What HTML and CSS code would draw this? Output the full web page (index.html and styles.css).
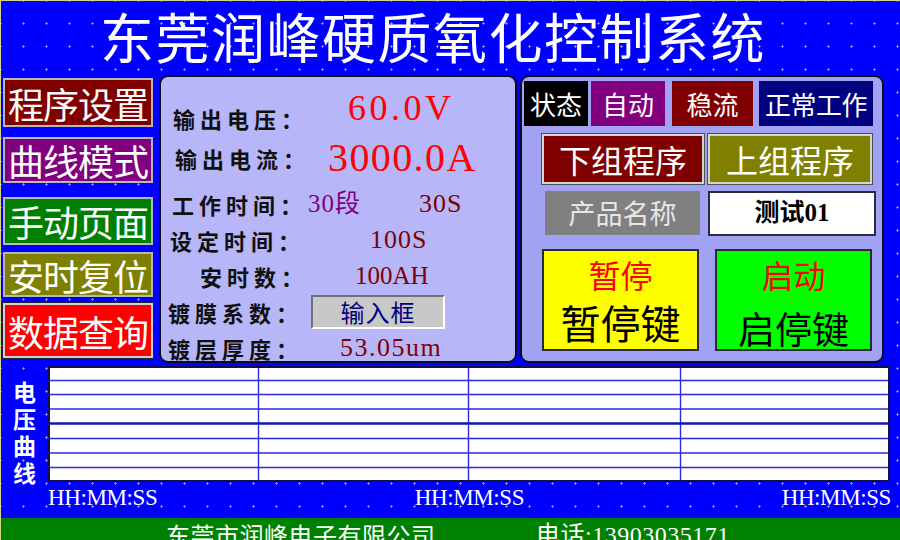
FILE: index.html
```html
<!DOCTYPE html>
<html lang="zh">
<head>
<meta charset="utf-8">
<title>东莞润峰硬质氧化控制系统</title>
<link rel="stylesheet" href="styles.css">
</head>
<body>
<div class="screen">
  <div class="header">东莞润峰硬质氧化控制系统</div>

  <div class="main">
    <div class="nav">
      <div class="nbtn n1">程序设置</div>
      <div class="nbtn n2">曲线模式</div>
      <div class="nbtn n3">手动页面</div>
      <div class="nbtn n4">安时复位</div>
      <div class="nbtn n5">数据查询</div>
    </div>

    <div class="panel info">
      <div class="row r1">
        <span class="lbl">输出电压：</span>
        <span class="val big v1">60.0V</span>
      </div>
      <div class="row r2">
        <span class="lbl">输出电流：</span>
        <span class="val big v2">3000.0A</span>
      </div>
      <div class="row r3">
        <span class="lbl">工作时间：</span>
        <span class="val purple v3">30段</span>
        <span class="val v3b">30S</span>
      </div>
      <div class="row">
        <span class="lbl l-set">设定时间：</span>
        <span class="val v4">100S</span>
      </div>
      <div class="row">
        <span class="lbl l-ah">安时数：</span>
        <span class="val v5">100AH</span>
      </div>
      <div class="row">
        <span class="lbl l-film">镀膜系数：</span>
        <span class="inputbox">输入框</span>
      </div>
      <div class="row">
        <span class="lbl l-film">镀层厚度：</span>
        <span class="val v7">53.05um</span>
      </div>
    </div>

    <div class="panel ctrl">
      <div class="status">
        <div class="st st-k">状态</div>
        <div class="st st-auto">自动</div>
        <div class="st st-cc">稳流</div>
        <div class="st st-ok">正常工作</div>
      </div>
      <div class="progs">
        <div class="pbtn p-down">下组程序</div>
        <div class="pbtn p-up">上组程序</div>
      </div>
      <div class="product">
        <div class="pname">产品名称</div>
        <div class="pval">测试01</div>
      </div>
      <div class="keys">
        <div class="key k-pause">
          <div class="k-top">暂停</div>
          <div class="k-main">暂停键</div>
        </div>
        <div class="key k-start">
          <div class="k-top">启动</div>
          <div class="k-main">启停键</div>
        </div>
      </div>
    </div>
  </div>

  <div class="curve">
    <div class="curve-label">
      <div class="cl">电</div>
      <div class="cl">压</div>
      <div class="cl">曲</div>
      <div class="cl">线</div>
    </div>
    <div class="chart">
      <svg width="842" height="116" viewBox="0 0 842 116">
        <rect x="0" y="0" width="842" height="116" fill="#ffffff"/>
        <g stroke="#2a2ae0" stroke-width="1.4">
          <line x1="0" y1="14.5" x2="842" y2="14.5"/>
          <line x1="0" y1="28.5" x2="842" y2="28.5"/>
          <line x1="0" y1="43" x2="842" y2="43"/>
          <line x1="0" y1="72.5" x2="842" y2="72.5"/>
          <line x1="0" y1="87" x2="842" y2="87"/>
          <line x1="0" y1="101.5" x2="842" y2="101.5"/>
          <line x1="210.5" y1="0" x2="210.5" y2="116"/>
          <line x1="420.5" y1="0" x2="420.5" y2="116"/>
          <line x1="632.5" y1="0" x2="632.5" y2="116"/>
        </g>
        <line x1="0" y1="57.5" x2="842" y2="57.5" stroke="#1414b0" stroke-width="2.4"/>
        <rect x="1" y="1" width="840" height="114" fill="none" stroke="#10104a" stroke-width="2"/>
      </svg>
    </div>
  </div>

  <div class="times">
    <span>HH:MM:SS</span>
    <span>HH:MM:SS</span>
    <span>HH:MM:SS</span>
  </div>

  <div class="footer">
    <span class="company">东莞市润峰电子有限公司</span>
    <span class="phone">电话:13903035171</span>
  </div>
</div>
</body>
</html>
```

FILE: styles.css
```css
* { box-sizing: border-box; }

html, body {
  margin: 0;
  padding: 0;
  background: #0000ff;
}

.screen {
  width: 900px;
  height: 540px;
  overflow: hidden;
  background-color: #0000ff;
  background-image: radial-gradient(circle, #9a9aff 0.9px, rgba(0,0,255,0) 1.3px);
  background-size: 23px 23px;
  background-position: 11px 11px;
  border-top: 1px solid #d6d68a;
  border-left: 1px solid #d6d68a;
  font-family: "Noto Sans CJK SC", "Noto Sans", sans-serif;
}

/* ---------- header ---------- */
.header {
  height: 74px;
  padding-left: 99px;
  font-size: 54px;
  line-height: 70px;
  letter-spacing: 1.5px;
  color: #ffffff;
  white-space: nowrap;
}

/* ---------- main row ---------- */
.main {
  display: flex;
  height: 291px;
}

.nav {
  width: 152px;
  margin-left: 2px;
  display: flex;
  flex-direction: column;
}

.nbtn {
  width: 150px;
  border: 2px solid #b8b8b8;
  color: #ffffff;
  font-size: 36px;
  line-height: 1;
  display: flex;
  align-items: center;
  justify-content: center;
  white-space: nowrap;
  letter-spacing: -1px;
}
.n1 { margin-top: 3px; height: 49px; background: #800000; }
.n2 { margin-top: 10px; height: 46px; background: #800080; }
.n3 { margin-top: 14px; height: 48px; background: #008000; }
.n4 { margin-top: 7px; height: 45px; background: #808000; }
.n5 { margin-top: 6px; height: 55px; background: #ff0000; border-color: #d0d0d0; box-shadow: 0 0 0 1px #202040; }

.panel {
  height: 288px;
  border: 2px solid #0c0c28;
  border-radius: 9px;
}

/* ---------- info panel ---------- */
.info {
  width: 358px;
  margin-left: 4px;
  background: #b6b6f8;
  padding-top: 12px;
}

.row {
  display: flex;
  align-items: center;
  height: 36px;
  white-space: nowrap;
}
.r1 { height: 46px; }
.r2 { height: 46px; }
.r3 { margin-top: 5px; }

.lbl {
  flex: 0 0 145px;
  width: 145px;
  padding-left: 12px;
  font-size: 22px;
  line-height: 26px;
  letter-spacing: 5px;
  font-weight: 700;
  color: #101010;
}
.r1 .lbl { padding-top: 12px; }
.r2 .lbl { padding-left: 14px; }
.r3 .lbl { padding-left: 11px; }
.l-set { padding-left: 9px; }
.l-ah { padding-left: 39px; }
.l-film { padding-left: 7px; }

.val {
  font-family: "Liberation Serif", "Noto Sans CJK SC", serif;
  font-size: 26px;
  line-height: 30px;
  letter-spacing: 1px;
  color: #800000;
}
.val.big {
  color: #ff0000;
}
.v1 { font-size: 36px; line-height: 40px; letter-spacing: 3.5px; margin-left: 42px; padding-bottom: 8px; }
.v2 { font-size: 40px; line-height: 44px; letter-spacing: 1.4px; margin-left: 22px; }
.purple { color: #800080; font-size: 25px; }
.v3 { margin-left: 2px; }
.v3b { margin-left: 58px; }
.v4 { margin-left: 64px; }
.v5 { margin-left: 49px; font-size: 25px; letter-spacing: 0; }
.v7 { margin-left: 34px; letter-spacing: 1.5px; }

.inputbox {
  margin-left: 5px;
  width: 134px;
  height: 34px;
  background: #c8c8c8;
  border-top: 2px solid #707070;
  border-left: 2px solid #707070;
  border-bottom: 2px solid #ffffff;
  border-right: 2px solid #ffffff;
  color: #000080;
  font-size: 24px;
  line-height: 30px;
  text-align: center;
  letter-spacing: 1px;
}

/* ---------- control panel ---------- */
.ctrl {
  width: 364px;
  margin-left: 3px;
  background: #a2a2f2;
  padding-top: 4px;
}

.status {
  display: flex;
  height: 45px;
  margin-left: 2px;
}
.st {
  height: 45px;
  color: #ffffff;
  font-size: 26px;
  line-height: 45px;
  text-align: center;
  white-space: nowrap;
}
.st-k { width: 64px; background: #000000; }
.st-auto { width: 74px; margin-left: 3px; background: #800080; }
.st-cc { width: 81px; margin-left: 7px; background: #800000; }
.st-ok { width: 114px; margin-left: 6px; background: #000080; letter-spacing: -0.5px; }

.progs {
  display: flex;
  margin-top: 8px;
  margin-left: 20px;
  height: 50px;
}
.pbtn {
  height: 50px;
  border: 2px solid #d4d4d4;
  box-shadow: 0 0 0 1px #505050;
  color: #ffffff;
  font-size: 32px;
  line-height: 46px;
  text-align: center;
  white-space: nowrap;
}
.p-down { width: 162px; background: #800000; }
.p-up { width: 164px; margin-left: 4px; background: #808000; }

.product {
  display: flex;
  margin-top: 7px;
  margin-left: 23px;
  height: 44px;
}
.pname {
  width: 155px;
  height: 44px;
  background: #808080;
  color: #e6e6e6;
  font-size: 27px;
  line-height: 44px;
  text-align: center;
}
.pval {
  width: 168px;
  height: 45px;
  margin-left: 8px;
  background: #ffffff;
  border: 2px solid #2a2a3a;
  color: #000000;
  font-family: "Liberation Serif", "Noto Sans CJK SC", serif;
  font-weight: 700;
  font-size: 25px;
  line-height: 40px;
  text-align: center;
}

.keys {
  display: flex;
  margin-top: 14px;
  margin-left: 20px;
}
.key {
  width: 157px;
  height: 102px;
  border: 2px solid #2a2a3a;
  display: flex;
  flex-direction: column;
  align-items: center;
  padding-top: 3px;
}
.k-pause { background: #ffff00; }
.k-start { background: #00ff00; margin-left: 16px; }
.k-top {
  color: #ff0000;
  font-size: 32px;
  line-height: 40px;
}
.k-main {
  margin-top: 4px;
  color: #000000;
  font-size: 40px;
  line-height: 48px;
}
.k-start .k-main { font-size: 37px; margin-top: 10px; }

/* ---------- curve ---------- */
.curve {
  display: flex;
  height: 116px;
}
.curve-label {
  width: 47px;
  padding-top: 12px;
  display: flex;
  flex-direction: column;
  align-items: center;
  color: #ffffff;
  font-weight: 700;
}
.cl {
  height: 27px;
  font-size: 23px;
  line-height: 27px;
}
.chart {
  width: 842px;
  height: 116px;
}
.chart svg { display: block; }

.times {
  display: flex;
  justify-content: space-between;
  width: 890px;
  height: 36px;
  padding-left: 47px;
  padding-top: 2px;
  color: #ffffff;
  font-family: "Liberation Serif", serif;
  font-size: 23px;
  line-height: 28px;
  letter-spacing: -0.4px;
}

/* ---------- footer ---------- */
.footer {
  height: 40px;
  background: #008000;
  color: #ffffff;
  padding-left: 165px;
  padding-top: 5px;
  font-size: 24px;
  line-height: 24px;
  white-space: nowrap;
  display: flex;
}
.company {
  width: 370px;
  letter-spacing: 0.5px;
}
.phone {
  font-family: "Liberation Serif", "Noto Sans CJK SC", serif;
  letter-spacing: 0.5px;
}
```
